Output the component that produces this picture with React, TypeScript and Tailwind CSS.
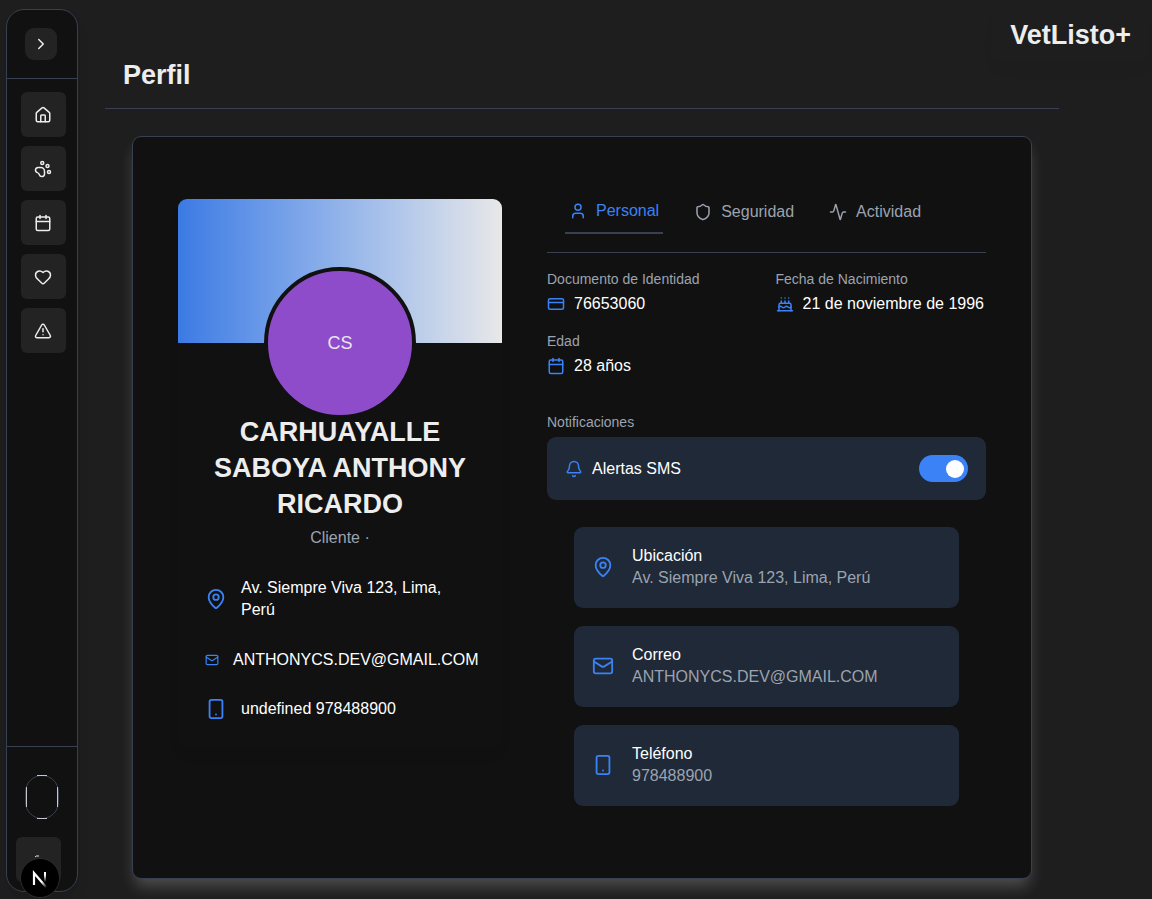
import { useState } from "react";
import type { ReactNode } from "react";
import {
  Activity,
  Bell,
  CakeIcon,
  Calendar,
  ChevronRight,
  CreditCard,
  Heart,
  House,
  MapPin,
  PawPrint,
  Shield,
  Smartphone,
  TriangleAlert,
  User,
} from "lucide-react";

function MailIcon({ className }: { className?: string }) {
  return (
    <svg viewBox="0 0 24 24" fill="none" stroke="currentColor" strokeWidth="2" strokeLinecap="round" strokeLinejoin="round" className={className} aria-hidden="true">
      <rect x="2" y="4" width="20" height="16" rx="2" />
      <path d="m22 7-8.97 5.7a1.94 1.94 0 0 1-2.06 0L2 7" />
    </svg>
  );
}

const navItems = [
  { label: "Inicio", Icon: House },
  { label: "Mascotas", Icon: PawPrint },
  { label: "Citas", Icon: Calendar },
  { label: "Favoritos", Icon: Heart },
  { label: "Alertas", Icon: TriangleAlert },
];

function Sidebar() {
  return (
    <aside className="mt-[9px] ml-1.5 flex h-[calc(100vh-16px)] w-[72px] shrink-0 flex-col rounded-[18px] border border-[#374151] bg-[#111111] shadow-lg">
      <div className="border-b border-[#374151] p-[18px]">
        <button type="button" aria-label="Expandir menú" className="flex size-8 items-center justify-center rounded-[9px] bg-[#232323]">
          <ChevronRight className="size-[18px]" />
        </button>
      </div>
      <nav className="flex grow flex-col gap-[9px] px-3.5 pt-[13px]">
        {navItems.map(({ label, Icon }) => (
          <a key={label} href="#" aria-label={label} className="size-[45px] rounded-md bg-[#232323] pt-3.5 pl-[13px]">
            <Icon className="block size-[18px]" />
          </a>
        ))}
      </nav>
      <div className="flex flex-col gap-[18px] border-t border-[#374151] px-[9px] pt-7 pb-[9px]">
        <button type="button" aria-label="Cuenta" className="ml-[9px] h-11 w-[34px] rounded-full border border-[#374151]">
          <svg viewBox="0 0 32 42" fill="none" stroke="#c4c7cc" className="block h-full w-full overflow-visible" aria-hidden="true">
            <path d="M.5 11v20M31.500 11v20" />
            <path d="M11 -.5h10M11 42.500h10" />
          </svg>
        </button>
        <button type="button" aria-label="Cerrar sesión" className="flex size-[45px] justify-center rounded-md bg-[#232323]">
          <svg viewBox="0 0 18 18" fill="none" stroke="currentColor" className="mt-3.5 size-[18px]" aria-hidden="true">
            <path d="M5 6q1-1.500 4-1" />
          </svg>
        </button>
      </div>
    </aside>
  );
}

function DevBadge() {
  return (
    <button type="button" aria-label="Next.js" className="fixed bottom-px left-5 flex size-10 items-center justify-center rounded-full border border-[#2c2c2c] bg-black">
      <svg viewBox="0 0 40 40" className="size-10 shrink-0" aria-hidden="true">
        <defs>
          <linearGradient id="diag" x1="13" y1="13" x2="26" y2="28" gradientUnits="userSpaceOnUse">
            <stop offset="0.700" stopColor="#fff" />
            <stop offset="1" stopColor="#fff" stopOpacity="0.200" />
          </linearGradient>
          <linearGradient id="stem" x1="0" y1="14" x2="0" y2="24" gradientUnits="userSpaceOnUse">
            <stop offset="0.300" stopColor="#fff" />
            <stop offset="1" stopColor="#fff" stopOpacity="0" />
          </linearGradient>
        </defs>
        <path d="M14 27V15L26 29" fill="none" stroke="url(#diag)" strokeWidth="2.200" />
        <path d="M24 14h2v10h-2z" fill="url(#stem)" />
      </svg>
    </button>
  );
}

function ProfileSummary() {
  return (
    <section className="mt-[9px] w-[324px] shrink-0 self-start rounded-[9px] shadow-[0_10px_15px_-3px_rgba(0,0,0,0.06)]">
      <div className="flex h-36 items-end justify-center rounded-t-[9px] bg-linear-to-r from-[#3b7ae4] to-[#e8e8e8]">
        <div className="-mb-[76px] flex size-[152px] shrink-0 items-center justify-center rounded-full border-4 border-[#111111] bg-[#8e4ccb] text-lg text-[#e5e7eb]">
          CS
        </div>
      </div>
      <div className="relative px-[27px] pt-[71px] pb-[27px]">
        <h2 className="text-center text-[27px] leading-9 font-bold text-[#ededed]">CARHUAYALLE SABOYA ANTHONY RICARDO</h2>
        <p className="mt-[5px] text-center text-[#9ca3af]">Cliente ·</p>
        <ul className="mt-7 flex flex-col gap-[27px]">
          <li className="flex items-center gap-3.5 pb-px">
            <MapPin className="size-[22px] shrink-0 text-[#3b82f6]" />
            <span>Av. Siempre Viva 123, Lima, Perú</span>
          </li>
          <li className="flex items-center gap-3.5">
            <MailIcon className="size-3.5 shrink-0 text-[#3b82f6]" />
            <span>ANTHONYCS.DEV@GMAIL.COM</span>
          </li>
          <li className="flex items-center gap-3.5">
            <Smartphone className="size-[22px] shrink-0 text-[#3b82f6]" />
            <span>undefined 978488900</span>
          </li>
        </ul>
      </div>
    </section>
  );
}

const tabs = [
  { label: "Personal", Icon: User },
  { label: "Seguridad", Icon: Shield },
  { label: "Actividad", Icon: Activity },
];

function Field({ label, icon, value }: { label: string; icon: ReactNode; value: string }) {
  return (
    <div>
      <dt className="text-[14px] leading-[18px] text-[#9ca3af]">{label}</dt>
      <dd className="mt-[5px] flex items-center gap-[9px] whitespace-nowrap">
        <span className="text-[#3b82f6]">{icon}</span>
        {value}
      </dd>
    </div>
  );
}

function ContactCard({ title, detail, icon }: { title: string; detail: string; icon: ReactNode }) {
  return (
    <li className="flex items-center gap-[18px] rounded-[9px] bg-[#1f2937] px-[18px] pt-[18px] pb-[19px]">
      <span className="text-[#3b82f6]">{icon}</span>
      <div>
        <h3>{title}</h3>
        <p className="text-[#9ca3af]">{detail}</p>
      </div>
    </li>
  );
}

function ProfileDetails() {
  const [tab, setTab] = useState("Personal");
  const [sms, setSms] = useState(true);
  return (
    <section className="min-w-0 grow">
      <div role="tablist" className="flex gap-[27px] border-b border-[#374151] px-[18px] pb-[18px]">
        {tabs.map(({ label, Icon }) => (
          <button
            key={label}
            type="button"
            role="tab"
            aria-selected={tab === label}
            onClick={() => setTab(label)}
            className={
              tab === label
                ? "flex h-11 items-center gap-[9px] border-b-2 border-[#374151] px-1 text-[#3b82f6]"
                : "flex h-11 items-center gap-[9px] px-1 text-[#9ca3af]"
            }
          >
            <Icon className="size-[18px]" />
            {label}
          </button>
        ))}
      </div>
      <dl className="mt-[17px] grid grid-cols-2 gap-x-[18px] gap-y-[17px]">
        <Field label="Documento de Identidad" icon={<CreditCard className="size-[18px]" />} value="76653060" />
        <Field label="Fecha de Nacimiento" icon={<CakeIcon className="size-[18px]" />} value="21 de noviembre de 1996" />
        <Field label="Edad" icon={<Calendar className="size-[18px]" />} value="28 años" />
      </dl>
      <h3 className="mt-9 text-[14px] leading-[18px] text-[#9ca3af]">Notificaciones</h3>
      <label className="mt-1.5 flex items-center gap-[9px] rounded-[9px] bg-[#1f2937] p-[18px]">
        <Bell className="size-[18px] text-[#3b82f6]" />
        <span className="grow">Alertas SMS</span>
        <input type="checkbox" role="switch" checked={sms} onChange={(e) => setSms(e.target.checked)} className="peer sr-only" />
        <span className="flex h-[27px] w-[49px] items-center rounded-full bg-[#4b5563] px-1 peer-checked:justify-end peer-checked:bg-[#3b82f6]">
          <span className="size-[18px] rounded-full bg-white" />
        </span>
      </label>
      <ul className="flex flex-col gap-[18px] p-[27px]">
        <ContactCard title="Ubicación" detail="Av. Siempre Viva 123, Lima, Perú" icon={<MapPin className="size-[22px]" />} />
        <ContactCard title="Correo" detail="ANTHONYCS.DEV@GMAIL.COM" icon={<MailIcon className="size-[22px]" />} />
        <ContactCard title="Teléfono" detail="978488900" icon={<Smartphone className="size-[22px]" />} />
      </ul>
    </section>
  );
}

export default function App() {
  return (
    <div className="flex min-h-screen overflow-hidden bg-[#1e1e1e] font-['Liberation_Sans',Arial,sans-serif] text-[16px] leading-[22px] text-[#ededed]">
      <Sidebar />
      <main className="mr-[93px] ml-[27px] min-w-0 grow pt-[57px]">
        <header className="border-b border-[#374151] px-[18px] pb-[15px]">
          <h1 className="text-[27px] leading-9 font-bold">Perfil</h1>
        </header>
        <div className="mx-[27px] mt-[27px] flex gap-[45px] rounded-[9px] border border-[#374151] bg-[#111111] px-[45px] pt-[53px] pb-[45px] text-white shadow-[0_10px_15px_-3px_rgba(255,255,255,0.22)]">
          <ProfileSummary />
          <ProfileDetails />
        </div>
      </main>
      <div className="absolute top-2 right-[3px] rounded-[9px] px-[18px] py-[9px] shadow-[0_10px_15px_-3px_rgba(0,0,0,0.04)]">
        <p className="text-[27px] leading-9 font-bold">VetListo+</p>
      </div>
      <DevBadge />
    </div>
  );
}
